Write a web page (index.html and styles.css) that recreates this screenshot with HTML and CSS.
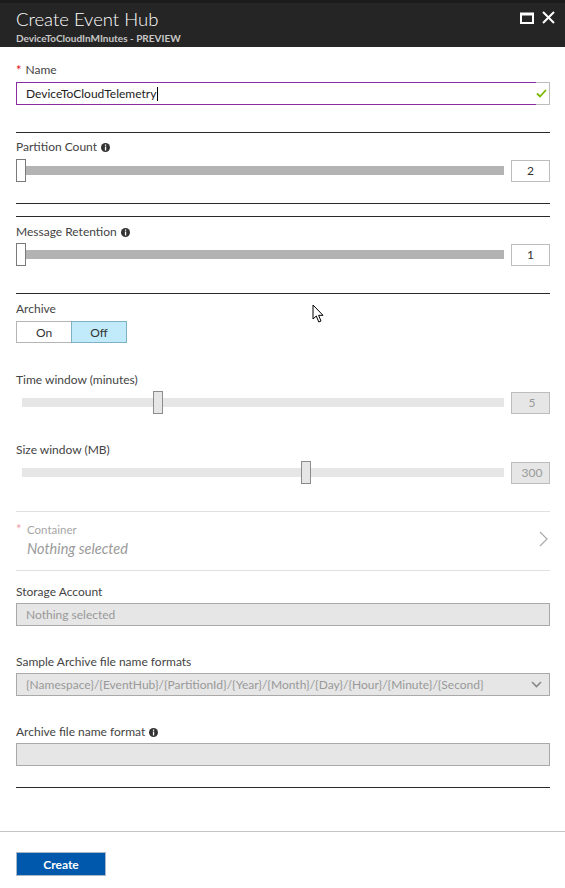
FILE: index.html
```html
<!DOCTYPE html>
<html>
<head>
<meta charset="utf-8">
<link rel="stylesheet" href="styles.css">
</head>
<body>
<div class="blade">
  <header class="hdr">
    <div class="hdr-text">
      <div class="title">Create Event Hub</div>
      <div class="subtitle">DeviceToCloudInMInutes - PREVIEW</div>
    </div>
    <div class="hdr-icons">
      <svg class="ico-max" width="14" height="12" viewBox="0 0 14 12"><rect x="1" y="1.5" width="12" height="9.5" fill="none" stroke="#fff" stroke-width="2"/><rect x="1" y="1" width="12" height="2.5" fill="#fff"/></svg>
      <svg class="ico-close" width="13" height="13" viewBox="0 0 13 13"><path d="M1 1 L12 12 M12 1 L1 12" stroke="#fff" stroke-width="2"/></svg>
    </div>
  </header>

  <main class="content">
    <div class="label lbl-name"><span class="req">*</span> Name</div>
    <div class="name-input">
      <div class="name-field">DeviceToCloudTelemetry<span class="caret"></span></div>
      <div class="name-check"><svg width="11" height="9" viewBox="0 0 11 9"><path d="M1 4.5 L4 7.5 L10 1" fill="none" stroke="#7ab800" stroke-width="1.8"/></svg></div>
    </div>

    <div class="rule dark r1"></div>

    <div class="label lbl-pc">Partition Count <svg class="info" width="9" height="9" viewBox="0 0 9 9"><circle cx="4.5" cy="4.5" r="4.5" fill="#333"/><rect x="3.9" y="1.5" width="1.3" height="1.3" fill="#fff"/><rect x="3.9" y="3.5" width="1.3" height="4" fill="#fff"/></svg></div>
    <div class="slider-row sr-pc">
      <div class="track-wrap">
        <div class="track solid"></div>
        <div class="thumb white" style="left:0%"></div>
      </div>
      <div class="valbox">2</div>
    </div>

    <div class="rule dark r2"></div>
    <div class="rule dark r3"></div>

    <div class="label lbl-mr">Message Retention <svg class="info" width="9" height="9" viewBox="0 0 9 9"><circle cx="4.5" cy="4.5" r="4.5" fill="#333"/><rect x="3.9" y="1.5" width="1.3" height="1.3" fill="#fff"/><rect x="3.9" y="3.5" width="1.3" height="4" fill="#fff"/></svg></div>
    <div class="slider-row sr-mr">
      <div class="track-wrap">
        <div class="track solid"></div>
        <div class="thumb white" style="left:0%"></div>
      </div>
      <div class="valbox">1</div>
    </div>

    <div class="rule dark r4"></div>

    <div class="label lbl-ar">Archive</div>
    <div class="toggle">
      <div class="tg on">On</div>
      <div class="tg off">Off</div>
    </div>

    <div class="label lbl-tw">Time window (minutes)</div>
    <div class="slider-row sr-tw disabled">
      <div class="track-wrap inset">
        <div class="track light"></div>
        <div class="thumb grey" style="left:27.2%"></div>
      </div>
      <div class="valbox dis">5</div>
    </div>

    <div class="label lbl-sw">Size window (MB)</div>
    <div class="slider-row sr-sw disabled">
      <div class="track-wrap inset">
        <div class="track light"></div>
        <div class="thumb grey" style="left:57.9%"></div>
      </div>
      <div class="valbox dis">300</div>
    </div>

    <div class="rule light r5"></div>

    <div class="picker">
      <span class="req faded">*</span>
      <div class="picker-text">
        <div class="picker-label">Container</div>
        <div class="picker-value">Nothing selected</div>
      </div>
      <svg class="chev" width="9" height="16" viewBox="0 0 9 16"><path d="M1 1 L8 8 L1 15" fill="none" stroke="#aaa" stroke-width="1.2"/></svg>
    </div>

    <div class="rule light r6"></div>

    <div class="label lbl-sa">Storage Account</div>
    <div class="box dis-box">Nothing selected</div>

    <div class="label lbl-sf">Sample Archive file name formats</div>
    <div class="box dis-box select">
      <span>{Namespace}/{EventHub}/{PartitionId}/{Year}/{Month}/{Day}/{Hour}/{Minute}/{Second}</span>
      <svg width="11" height="7" viewBox="0 0 11 7"><path d="M1 1 L5.5 5.5 L10 1" fill="none" stroke="#888" stroke-width="1.6"/></svg>
    </div>

    <div class="label lbl-af">Archive file name format <svg class="info" width="9" height="9" viewBox="0 0 9 9"><circle cx="4.5" cy="4.5" r="4.5" fill="#333"/><rect x="3.9" y="1.5" width="1.3" height="1.3" fill="#fff"/><rect x="3.9" y="3.5" width="1.3" height="4" fill="#fff"/></svg></div>
    <div class="box dis-box"></div>

    <div class="rule dark r7"></div>
  </main>

  <footer class="foot">
    <button class="create">Create</button>
  </footer>

  <svg class="pointer" width="13" height="20" viewBox="0 0 13 20"><path d="M1 1 L1 15 L4.3 12 L6.8 18 L9 17 L6.6 11.3 L11 11.3 Z" fill="#fff" stroke="#000" stroke-width="1"/></svg>
</div>
</body>
</html>
```

FILE: styles.css
```css
* { box-sizing: border-box; }
html, body { margin: 0; padding: 0; background: #fff; }
body {
  font-family: "Segoe UI", Lato, "Open Sans", sans-serif;
  color: #444;
  font-size: 12px;
}
.blade { position: relative; width: 565px; height: 888px; overflow: hidden; }

.hdr {
  height: 47px;
  background: #252525;
  border-top: 3px solid #1b1b1b;
  display: flex;
  justify-content: space-between;
  padding: 0 10px 0 16px;
}
.hdr-text { padding-top: 5px; }
.title { color: #fff; font-size: 18.5px; font-weight: 300; line-height: 23px; }
.subtitle { color: #c8c8c8; font-size: 10px; font-weight: 700; line-height: 13px; margin-top: 1px; }
.hdr-icons { display: flex; align-items: flex-start; gap: 8px; padding-top: 8px; }
.ico-max { margin-top: 1px; }

.content { padding: 0 15px 0 16px; }
.label { line-height: 16px; display: flex; align-items: center; gap: 3px; }
.req { color: #e81123; font-size: 13px; margin-right: 1px; }
.req.faded { color: #f0a0a8; }
.info { margin-left: 1px; }

.lbl-name { margin-top: 15px; }
.name-input { margin-top: 4px; height: 23px; display: flex; }
.name-field {
  flex: 1;
  border: 1px solid #8a2da5;
  border-right: none;
  padding: 0 9px;
  line-height: 21px;
  font-size: 12px;
  color: #222;
  display: flex;
  align-items: center;
}
.caret { display: inline-block; width: 1px; height: 14px; background: #000; margin-left: 1px; }
.name-check {
  width: 14px;
  border: 1px solid #bcbcbc;
  border-left: none;
  display: flex;
  align-items: center;
  justify-content: flex-start;
}

.rule { height: 1px; }
.rule.dark { background: #2a2a2a; }
.rule.light { background: #e0e0e0; }
.r1 { margin-top: 27px; }
.lbl-pc { margin-top: 6px; }
.sr-pc { margin-top: 4px; }
.r2 { margin-top: 21px; }
.r3 { margin-top: 12px; }
.lbl-mr { margin-top: 7px; }
.sr-mr { margin-top: 3px; }
.r4 { margin-top: 27px; }

.slider-row { height: 23px; display: flex; align-items: center; gap: 7px; }
.track-wrap { position: relative; flex: 1; height: 23px; display: flex; align-items: center; }
.track-wrap.inset { margin-left: 6px; }
.track { height: 9px; width: 100%; }
.track.solid { background: #b3b3b3; }
.track.light { background: #e6e6e6; }
.thumb { position: absolute; top: 0; width: 10px; height: 23px; border: 1px solid #7a7a7a; }
.thumb.white { background: #fff; }
.thumb.grey { background: #e6e6e6; border-color: #8c8c8c; }
.valbox {
  width: 39px; height: 22px;
  border: 1px solid #bdbdbd;
  display: flex; align-items: center; justify-content: center;
  color: #333;
}
.valbox.dis { background: #e6e6e6; color: #9a9a9a; padding-left: 3px; }

.lbl-ar { margin-top: 7px; }
.toggle { margin-top: 4px; display: flex; width: 111px; height: 22px; }
.tg { flex: 1; display: flex; align-items: center; justify-content: center; color: #333; }
.tg.on { border: 1px solid #b5b5b5; border-right: none; background: #fff; }
.tg.off { border: 1px solid #7fb0c6; background: #c1ebfa; }

.lbl-tw { margin-top: 29px; }
.sr-tw { margin-top: 3px; }
.lbl-sw { margin-top: 28px; }
.sr-sw { margin-top: 3px; }
.r5 { margin-top: 27px; }

.picker { display: flex; align-items: flex-start; padding: 10px 2px 11px 0; }
.picker .req { width: 11px; line-height: 15px; margin-right: 0; }
.picker-text { flex: 1; }
.picker-label { color: #a6a6a6; font-size: 11.5px; line-height: 15px; }
.picker-value { color: #9a9a9a; font-style: italic; font-size: 14.5px; line-height: 20px; margin-top: 2px; }
.chev { margin-top: 9px; }

.lbl-sa { margin-top: 13px; }
.box {
  margin-top: 3px;
  height: 23px;
  border: 1px solid #a9a9a9;
  padding: 0 9px;
  display: flex; align-items: center;
}
.dis-box { background: #e6e6e6; color: #999; }
.select { justify-content: space-between; padding-right: 7px; }
.lbl-sf { margin-top: 28px; }
.lbl-af { margin-top: 28px; }
.r7 { margin-top: 21px; }

.foot { margin-top: 43px; border-top: 1px solid #c4c4c4; padding: 20px 16px 0; }
.create {
  width: 90px; height: 24px;
  background: #0058ad;
  border: 1px solid #a8b6c6;
  color: #fff;
  font-family: "Segoe UI", Lato, "Open Sans", sans-serif;
  font-weight: 700;
  font-size: 12px;
  padding: 0;
}

.pointer { position: absolute; left: 312px; top: 304px; }
```
